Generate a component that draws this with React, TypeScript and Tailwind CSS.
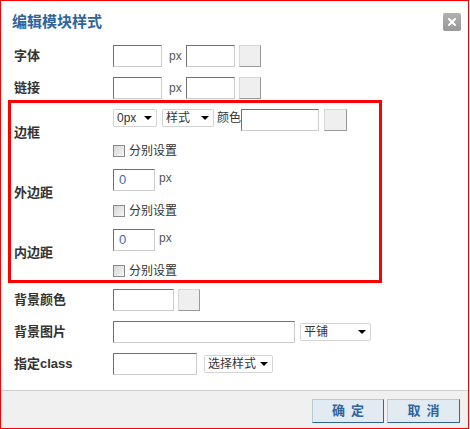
import { X } from "lucide-react"

const font = "font-['Liberation_Sans','Noto_Sans_CJK_SC',sans-serif]"

function TextInput({ w, value }: { w: string; value?: string }) {
  return (
    <div
      className={`${w} h-[22px] shrink-0 border border-t-[#707070] border-l-[#707070] border-b-[#cccccc] border-r-[#cccccc] bg-white px-[5px] text-[13px] leading-[20px] text-[#3d6ca8]`}
    >
      {value}
    </div>
  )
}

function PickButton({ w = "w-[22px]" }: { w?: string }) {
  return (
    <div
      className={`${w} h-[22px] shrink-0 border border-t-[#d8d8d8] border-l-[#d8d8d8] border-b-[#999999] border-r-[#999999] bg-[#efefef]`}
    />
  )
}

function Select({ w, label }: { w: string; label: string }) {
  return (
    <div
      className={`${w} flex h-[18px] shrink-0 items-center justify-between rounded-[2px] border border-[#d4d4d4] bg-white pl-[3px] pr-[4px] text-[12px] leading-none text-[#333]`}
    >
      <span>{label}</span>
      <span className="h-0 w-0 border-x-[4px] border-t-[4px] border-x-transparent border-t-black" />
    </div>
  )
}

function Checkbox() {
  return (
    <div className="flex h-[13px] items-center gap-[4px]">
      <span className="h-[12px] w-[12px] border border-[#8a8a8a] bg-gradient-to-br from-[#d6d6d6] to-[#f6f6f6]" />
      <span className="text-[12px] leading-none text-[#333]">分别设置</span>
    </div>
  )
}

function Px({ className = "" }: { className?: string }) {
  return <span className={`text-[12px] text-[#555] ${className}`}>px</span>
}

function Row({ label, children }: { label: string; children: React.ReactNode }) {
  return (
    <div className="flex h-[22px] items-center">
      <div className="w-[112px] pl-[13px] text-[13px] font-bold text-[#333]">{label}</div>
      <div className="flex items-center">{children}</div>
    </div>
  )
}

function Group({ label, children }: { label: string; children: React.ReactNode }) {
  return (
    <div className="flex h-[60px]">
      <div className="flex h-[48px] w-[102px] items-center pl-[3px] text-[13px] font-bold text-[#333]">
        {label}
      </div>
      <div className="flex flex-col">
        <div className="flex h-[22px] items-start">{children}</div>
        <div className="mt-[13px]">
          <Checkbox />
        </div>
      </div>
    </div>
  )
}

export default function App() {
  return (
    <div className={`${font} flex h-[429px] w-[469px] flex-col border border-[#ff0000] bg-white`}>
      {/* Header */}
      <div className="flex h-[44px] items-start justify-between pl-[11px] pr-[7px] pt-[10px]">
        <h1 className="text-[15px] font-bold leading-[22px] text-[#2f649c]">编辑模块样式</h1>
        <button
          type="button"
          className="mt-[2px] flex h-[18px] w-[18px] items-center justify-center rounded-[2px] bg-gradient-to-b from-[#b0b0b0] to-[#999999]"
        >
          <X className="h-[12px] w-[12px] text-white" strokeWidth={4} />
        </button>
      </div>

      <div className="flex flex-col gap-[10px]">
        <Row label="字体">
          <TextInput w="w-[49px]" />
          <Px className="ml-[7px] mr-[4px]" />
          <TextInput w="w-[49px]" />
          <div className="ml-[4px]">
            <PickButton />
          </div>
        </Row>
        <Row label="链接">
          <TextInput w="w-[49px]" />
          <Px className="ml-[7px] mr-[4px]" />
          <TextInput w="w-[49px]" />
          <div className="ml-[4px]">
            <PickButton />
          </div>
        </Row>
      </div>

      {/* Highlighted block */}
      <div className="ml-[7px] mt-[1px] w-[374px] border-[3px] border-[#ff0000] pb-[3px] pt-[6px] [&>div:last-child]:h-[48px]">
        <Group label="边框">
          <Select w="w-[44px]" label="0px" />
          <div className="ml-[5px]">
            <Select w="w-[52px]" label="样式" />
          </div>
          <span className="ml-[3px] text-[12px] leading-[18px] text-[#333]">颜色</span>
          <TextInput w="w-[78px]" />
          <div className="ml-[5px]">
            <PickButton w="w-[23px]" />
          </div>
        </Group>
        <Group label="外边距">
          <TextInput w="w-[42px]" value="0" />
          <Px className="ml-[4px] leading-[18px]" />
        </Group>
        <Group label="内边距">
          <TextInput w="w-[42px]" value="0" />
          <Px className="ml-[4px] leading-[18px]" />
        </Group>
      </div>

      <div className="mt-[6px] flex flex-col gap-[10px]">
        <Row label="背景颜色">
          <TextInput w="w-[61px]" />
          <div className="ml-[4px]">
            <PickButton />
          </div>
        </Row>
        <Row label="背景图片">
          <TextInput w="w-[182px]" />
          <div className="ml-[5px]">
            <Select w="w-[71px]" label="平铺" />
          </div>
        </Row>
        <Row label="指定class">
          <TextInput w="w-[84px]" />
          <div className="ml-[7px]">
            <Select w="w-[69px]" label="选择样式" />
          </div>
        </Row>
      </div>

      <div className="flex-1" />

      {/* Footer */}
      <div className="flex h-[38px] justify-end gap-[3px] border-t border-[#cfcfcf] bg-[#f0f0f0] pr-[8px] pt-[8px]">
        <button
          type="button"
          className="h-[24px] w-[72px] border border-t-[#b7cadc] border-l-[#b7cadc] border-b-[#2f649c] border-r-[#2f649c] bg-[#e2eaf2] pl-[6px] text-[13px] font-bold tracking-[6px] text-[#2f649c]"
        >
          确定
        </button>
        <button
          type="button"
          className="h-[24px] w-[73px] border border-t-[#b7cadc] border-l-[#b7cadc] border-b-[#2f649c] border-r-[#2f649c] bg-[#e2eaf2] pl-[6px] text-[13px] font-bold tracking-[6px] text-[#2f649c]"
        >
          取消
        </button>
      </div>
    </div>
  )
}
